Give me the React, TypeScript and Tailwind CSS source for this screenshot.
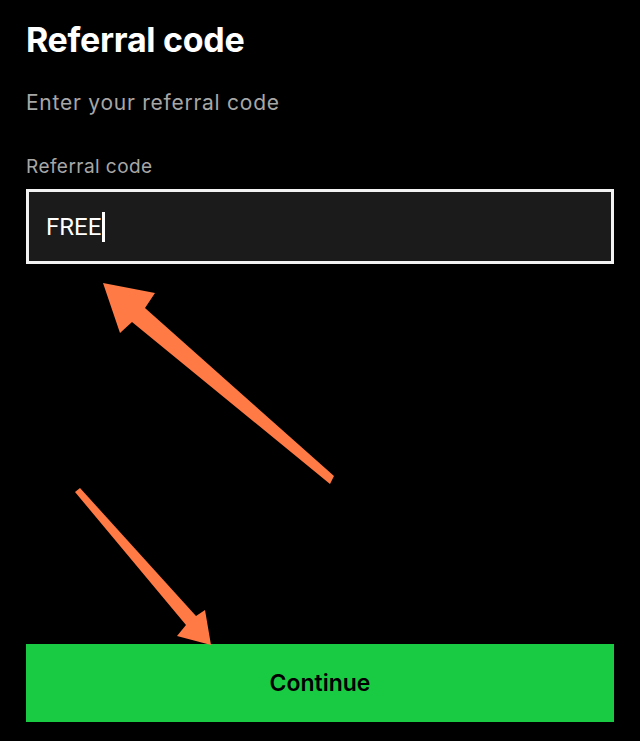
import React from "react";

export default function App() {
  return (
    <div className="relative w-[640px] h-[741px] bg-black overflow-hidden" style={{ fontFamily: "Inter, 'Noto Sans', sans-serif" }}>
      <div className="flex flex-col h-full px-[26px]">
        <h1 className="mt-[18px] text-[34px] leading-[44px] font-bold text-white tracking-[-0.3px]">Referral code</h1>
        <p className="mt-[27px] text-[21px] leading-[28px] text-[#a7a7a7] tracking-[0.75px]">Enter your referral code</p>
        <label className="mt-[38px] text-[19px] leading-[24px] text-[#a7a7a7] tracking-[0.45px]">Referral code</label>
        <div className="mt-[10px] h-[75px] border-[3px] border-[#f2f2f2] bg-[#1b1b1b] flex items-center pl-[17px]">
          <span className="text-[24px] text-white flex items-center" style={{ fontFamily: "Roboto, sans-serif" }}>
            FREE
            <span className="inline-block w-[3px] h-[30px] bg-white ml-[1px]" />
          </span>
        </div>
        <div className="flex-1" />
        <button className="mb-[19px] h-[78px] w-full bg-[#19cb43] text-black text-[23px] font-semibold">Continue</button>
      </div>
      <svg className="absolute inset-0 pointer-events-none" width="640" height="741" viewBox="0 0 640 741">
        <polygon
          fill="#ff7a45"
          points="103,283 155,293 145,308 334,476 330,484 132,322 120,333"
        />
        <polygon
          fill="#ff7a45"
          points="75,492 80,488 196,616 205,610 211,645 177,636 186,625"
        />
      </svg>
    </div>
  );
}
